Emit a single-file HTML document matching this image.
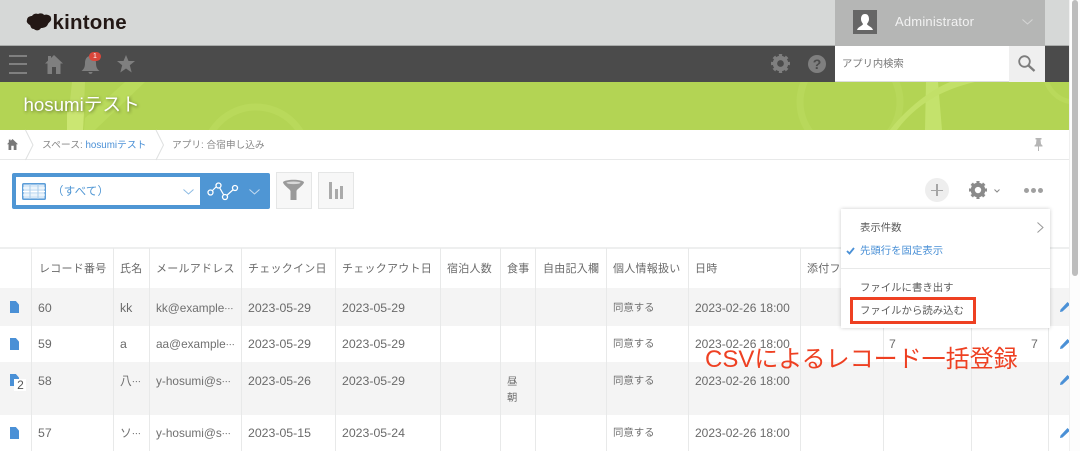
<!DOCTYPE html>
<html lang="ja"><head><meta charset="utf-8">
<style>
*{box-sizing:border-box}
html,body{margin:0;padding:0;width:1080px;height:451px;overflow:hidden;background:#fff}
body{position:relative;font-family:"Liberation Sans","Noto Sans CJK JP",sans-serif;color:#666}
.a{position:absolute;white-space:nowrap}
svg{position:absolute;display:block;overflow:visible}
.c{position:absolute;font-size:12.3px;line-height:16px;color:#6a6a6a;white-space:nowrap}
.c i{font-style:normal;font-size:9px}
.d{font-size:12px}
.m{font-size:11.8px;color:#707070}
.j{font-size:10.4px;color:#707070;margin-top:1px}
.h{position:absolute;top:261px;font-size:11px;line-height:16px;letter-spacing:.25px;color:#6a6a6a;white-space:nowrap}
.v{position:absolute;top:248px;bottom:0;width:1px;background:#e8e9e9}
.doc{position:absolute;left:10px;width:9px;height:12px;background:#4a90d6;clip-path:polygon(0 0,65% 0,100% 30%,100% 100%,0 100%)}
.mi{position:absolute;left:860px;font-size:10.4px;line-height:16px;color:#5a5a5a;white-space:nowrap}
</style></head><body>

<!-- header -->
<div class="a" style="left:0;top:0;width:1069px;height:46px;background:#d6d8d7;border-bottom:1px solid #a9abaa"></div>
<svg style="left:26px;top:13px" width="27" height="18" viewBox="0 0 27 18"><path d="M1 7C1 4 4 3 6 3C7 1 10 0 12 1C14 0 17 0 18 2C20 1 25 2 25 5C26 8 23 9 22 11C21 14 18 15 15 15C13 18 10 18 8 16C5 16 5 14 4 12C2 11 0 9 1 7Z" fill="#231815"/></svg>
<div class="a" style="left:52.500px;top:10px;font-size:20.500px;line-height:25px;font-weight:700;color:#231815;letter-spacing:.2px">kintone</div>

<div class="a" style="left:835px;top:0;width:210px;height:46px;background:#b5b6b5"></div>
<div class="a" style="left:853px;top:10px;width:24px;height:24px;background:#666"></div>
<svg style="left:853px;top:10px" width="24" height="24" viewBox="0 0 24 24"><path d="M12 4C15 4 16 6.500 16 9C16 11.500 14.500 13 14 14C14.500 16 19 16.500 20 20H4C5 16.500 9.500 16 10 14C9.500 13 8 11.500 8 9C8 6.500 9 4 12 4Z" fill="#fff"/></svg>
<div class="a" style="left:895px;top:14px;font-size:13px;line-height:16px;color:#f2f2f2;letter-spacing:.2px">Administrator</div>
<svg style="left:1022px;top:19px" width="11" height="6" viewBox="0 0 11 6"><path d="M.5.5L5.500 5L10.500.5" fill="none" stroke="#d5d6d5" stroke-width="1"/></svg>

<!-- dark bar -->
<div class="a" style="left:0;top:46px;width:1069px;height:36px;background:#4b4b4b"></div>
<div class="a" style="left:9px;top:55px;width:18px;height:2px;background:#808080"></div>
<div class="a" style="left:9px;top:63px;width:18px;height:2px;background:#808080"></div>
<div class="a" style="left:9px;top:72px;width:18px;height:2px;background:#808080"></div>
<svg style="left:45px;top:55px" width="18" height="19" viewBox="0 0 18 19"><path d="M9 0L18 8.500H15.500V19H11V12H7V19H2.500V8.500H0L3 5.600V1H6V3Z" fill="#7f7f7f"/></svg>
<svg style="left:81px;top:56px" width="19" height="19" viewBox="0 0 19 19"><path d="M9.500 0C13 0 15 3 15 7C15 11 16 13 18.500 15H.5C3 13 4 11 4 7C4 3 6 0 9.500 0ZM7.500 16H11.500C11.500 18.500 7.500 18.500 7.500 16Z" fill="#7f7f7f"/></svg>
<div class="a" style="left:89px;top:52px;width:12px;height:9px;border-radius:5px;background:#d9473b;color:#fff;font-size:7px;line-height:9px;text-align:center">1</div>
<svg style="left:117px;top:55px" width="18" height="18" viewBox="0 0 18 18"><path d="M9 0L11.500 6H18L12.800 10.200L14.700 17.500L9 13.500L3.300 17.500L5.200 10.200L0 6H6.500Z" fill="#7f7f7f"/></svg>
<svg style="left:771px;top:54px" width="19" height="19" viewBox="0 0 24 24"><circle cx="12" cy="12" r="7" fill="none" stroke="#7f7f7f" stroke-width="5.500"/><circle cx="12" cy="12" r="10.500" fill="none" stroke="#7f7f7f" stroke-width="3" pathLength="80" stroke-dasharray="5 5" stroke-dashoffset="2.500"/></svg>
<div class="a" style="left:808px;top:55px;width:18px;height:18px;border-radius:50%;background:#7f7f7f;color:#4b4b4b;font-size:14px;font-weight:700;line-height:18px;text-align:center">?</div>
<div class="a" style="left:835px;top:46px;width:174px;height:36px;background:#fff;border-bottom:1px solid #ddd"></div>
<div class="a" style="left:842px;top:57px;font-size:10.300px;line-height:16px;color:#777">アプリ内検索</div>
<div class="a" style="left:1009px;top:46px;width:36px;height:36px;background:#efefef"></div>
<svg style="left:1018px;top:55px" width="17" height="17" viewBox="0 0 17 17"><circle cx="6.500" cy="6.500" r="5.300" fill="none" stroke="#7d7d7d" stroke-width="1.800"/><path d="M10.500 10.500L16.500 16" stroke="#7d7d7d" stroke-width="2.300"/></svg>

<!-- green -->
<div class="a" style="left:0;top:82px;width:1069px;height:48px;background:#b3d454;overflow:hidden">
<svg style="left:0;top:0" width="1069" height="48" viewBox="0 0 1069 48">
<path d="M72 0H85L83 48H67Z" fill="#bfdc64"/><path d="M67 30H84L83 48H67Z" fill="#cbe672"/><path d="M85 36L125 0H145L95 48H84Z" fill="#badb5c"/>
<circle cx="256" cy="77" r="52" fill="none" stroke="#b9d95b" stroke-width="7"/>
<circle cx="850" cy="20" r="50" fill="none" stroke="#b8d85b" stroke-width="7"/>
<path d="M926 0H938L942 48H925Z" fill="#c4e26c"/><path d="M897 48C915 24 940 8 975 0H950C930 8 905 28 890 48Z" fill="#c2e068"/>
<circle cx="1075" cy="-10" r="30" fill="none" stroke="#b9d95b" stroke-width="5"/>
</svg></div>
<div class="a" style="left:23.500px;top:92px;font-size:18.700px;line-height:25px;color:#fff;text-shadow:1px 1px 3px rgba(0,0,0,.45)">hosumiテスト</div>

<!-- breadcrumb -->
<div class="a" style="left:0;top:159px;width:1069px;height:1px;background:#e8e9e9"></div>
<svg style="left:7px;top:139px" width="11" height="11" viewBox="0 0 18 18"><path d="M9 0L18 8.500H15.500V18H11V11H7V18H2.500V8.500H0L3 5.600V1H6V3Z" fill="#777"/></svg>
<svg style="left:25px;top:130px" width="150" height="30" viewBox="0 0 150 30"><path d="M.5 0L8 15L.5 30M131 0L138.500 15L131 30" fill="none" stroke="#dfe0e0"/></svg>
<div class="a" style="left:42px;top:138px;font-size:9.800px;line-height:15px;color:#888">スペース: <span style="color:#4a90d6">hosumiテスト</span></div>
<div class="a" style="left:172px;top:138px;font-size:9.700px;line-height:15px;color:#888">アプリ: 合宿申し込み</div>
<svg style="left:1034px;top:138px" width="9" height="13" viewBox="0 0 9 13"><path d="M1.500 0H7.500V1.500H6.500L7 6L8.500 7.500V8.500H5V13H4V8.500H.5V7.500L2 6L2.500 1.500H1.500Z" fill="#b5b5b5"/></svg>

<!-- view selector -->
<div class="a" style="left:12px;top:173px;width:258px;height:36px;background:#4f96d4;border-radius:2px"></div>
<div class="a" style="left:16px;top:177px;width:184px;height:28px;background:#fff"></div>
<svg style="left:22px;top:183px" width="24" height="17" viewBox="0 0 24 17"><rect x=".75" y=".75" width="22.500" height="15.500" rx="1" fill="#d7e8f7" stroke="#5b9dd8" stroke-width="1.500"/><path d="M1 5H23M1 8.500H23M1 12H23" stroke="#fff"/><path d="M8 1V16M16 1V16" stroke="#a9cbea"/></svg>
<div class="a" style="left:52px;top:184px;font-size:11.500px;line-height:16px;color:#4f96d4;letter-spacing:.2px">（すべて）</div>
<svg style="left:183px;top:189px" width="11" height="6" viewBox="0 0 11 6"><path d="M.5.5L5.500 5L10.500.5" fill="none" stroke="#8dbbe3" stroke-width="1"/></svg>
<svg style="left:207px;top:182px" width="32" height="19" viewBox="0 0 32 19"><path d="M3 11L11 3L18 15L28 6" fill="none" stroke="#fff" stroke-width="1.200"/><g fill="#4f96d4" stroke="#fff" stroke-width="1.300"><circle cx="3.500" cy="10.500" r="2.500"/><circle cx="11.500" cy="3.500" r="2.500"/><circle cx="18" cy="15" r="2.500"/><circle cx="28" cy="6" r="2.500"/></g></svg>
<svg style="left:249px;top:189px" width="11" height="6" viewBox="0 0 11 6"><path d="M.5.5L5.500 5L10.500.5" fill="none" stroke="#c6dcf1" stroke-width="1"/></svg>

<div class="a" style="left:276px;top:172px;width:36px;height:37px;background:#f7f7f7;border:1px solid #e5e6e6"></div>
<svg style="left:283px;top:180px" width="21" height="20" viewBox="0 0 21 20"><path d="M0 2C3 -1 18 -1 21 2C21 5 14 9 13.500 11V20H7.500V11C7 9 0 5 0 2Z" fill="#9a9a9a"/><ellipse cx="10.500" cy="2.800" rx="7" ry="1.300" fill="#d8d8d8"/></svg>
<div class="a" style="left:318px;top:172px;width:36px;height:37px;background:#f7f7f7;border:1px solid #e5e6e6"></div>
<div class="a" style="left:329px;top:182px;width:3px;height:17px;background:#aaa"></div>
<div class="a" style="left:335px;top:189px;width:3px;height:10px;background:#aaa"></div>
<div class="a" style="left:340px;top:186px;width:3px;height:13px;background:#aaa"></div>

<!-- right tools -->
<div class="a" style="left:925px;top:178px;width:24px;height:24px;border-radius:50%;background:#eeeeee"></div>
<div class="a" style="left:931px;top:189.500px;width:12px;height:1.500px;background:#a5a5a5"></div>
<div class="a" style="left:936.300px;top:184px;width:1.500px;height:12px;background:#a5a5a5"></div>
<svg style="left:969px;top:181px" width="18" height="18" viewBox="0 0 24 24"><circle cx="12" cy="12" r="7" fill="none" stroke="#8a8a8a" stroke-width="5.500"/><circle cx="12" cy="12" r="10.500" fill="none" stroke="#8a8a8a" stroke-width="3" pathLength="80" stroke-dasharray="5 5" stroke-dashoffset="2.500"/></svg>
<svg style="left:994px;top:189px" width="6" height="4" viewBox="0 0 6 4"><path d="M.5.5L3 3L5.500.5" fill="none" stroke="#888"/></svg>
<div class="a" style="left:1024px;top:188px;width:5px;height:5px;border-radius:50%;background:#a0a0a0"></div>
<div class="a" style="left:1031px;top:188px;width:5px;height:5px;border-radius:50%;background:#a0a0a0"></div>
<div class="a" style="left:1038px;top:188px;width:5px;height:5px;border-radius:50%;background:#a0a0a0"></div>

<!-- table backgrounds -->
<div class="a" style="left:0;top:247px;width:1069px;height:2px;background:#eeefef"></div>
<div class="a" style="left:0;top:288px;width:1069px;height:38px;background:#f4f4f4"></div>
<div class="a" style="left:0;top:362px;width:1069px;height:53px;background:#f4f4f4"></div>
<div class="v" style="left:31px"></div><div class="v" style="left:113px"></div><div class="v" style="left:149px"></div><div class="v" style="left:241px"></div><div class="v" style="left:335px"></div><div class="v" style="left:440px"></div><div class="v" style="left:500px"></div><div class="v" style="left:535px"></div><div class="v" style="left:606px"></div><div class="v" style="left:688px"></div><div class="v" style="left:800px"></div><div class="v" style="left:883px"></div><div class="v" style="left:971px"></div><div class="v" style="left:1048px"></div>

<div class="h" style="left:39px">レコード番号</div>
<div class="h" style="left:120px">氏名</div>
<div class="h" style="left:156px">メールアドレス</div>
<div class="h" style="left:248px">チェックイン日</div>
<div class="h" style="left:342px">チェックアウト日</div>
<div class="h" style="left:447px">宿泊人数</div>
<div class="h" style="left:507px">食事</div>
<div class="h" style="left:543px">自由記入欄</div>
<div class="h" style="left:613px">個人情報扱い</div>
<div class="h" style="left:695px">日時</div>
<div class="h" style="left:807px">添付ファイル</div>

<!-- rows -->
<div class="doc" style="top:301px"></div>
<div class="c" style="left:38px;top:300px">60</div><div class="c" style="left:120px;top:300px">kk</div><div class="c m" style="left:156px;top:300px">kk@example<i>⋯</i></div><div class="c" style="left:248px;top:300px">2023-05-29</div><div class="c" style="left:342px;top:300px">2023-05-29</div><div class="c j" style="left:613px;top:300px">同意する</div><div class="c d" style="left:695px;top:300px">2023-02-26 18:00</div>

<div class="doc" style="top:338px"></div>
<div class="c" style="left:38px;top:336px">59</div><div class="c" style="left:120px;top:336px">a</div><div class="c m" style="left:156px;top:336px">aa@example<i>⋯</i></div><div class="c" style="left:248px;top:336px">2023-05-29</div><div class="c" style="left:342px;top:336px">2023-05-29</div><div class="c j" style="left:613px;top:336px">同意する</div><div class="c d" style="left:695px;top:336px">2023-02-26 18:00</div><div class="c" style="left:889px;top:336px">7</div><div class="c" style="left:1031px;top:336px">7</div>

<div class="doc" style="top:374px"></div>
<div class="a" style="left:14px;top:379px;width:12px;height:12px;background:#fff;font-size:12px;line-height:13px;text-align:center;color:#555;padding-left:1px">2</div>
<div class="c" style="left:38px;top:373px">58</div><div class="c m" style="left:120px;top:373px">八<i>⋯</i></div><div class="c m" style="left:156px;top:373px">y-hosumi@s<i>⋯</i></div><div class="c" style="left:248px;top:373px">2023-05-26</div><div class="c" style="left:342px;top:373px">2023-05-29</div><div class="c j" style="left:507px;top:374px">昼</div><div class="c j" style="left:507px;top:390px">朝</div><div class="c j" style="left:613px;top:373px">同意する</div><div class="c d" style="left:695px;top:373px">2023-02-26 18:00</div>

<div class="doc" style="top:427px"></div>
<div class="c" style="left:38px;top:425px">57</div><div class="c m" style="left:120px;top:425px">ソ<i>⋯</i></div><div class="c m" style="left:156px;top:425px">y-hosumi@s<i>⋯</i></div><div class="c" style="left:248px;top:425px">2023-05-15</div><div class="c" style="left:342px;top:425px">2023-05-24</div><div class="c j" style="left:613px;top:425px">同意する</div><div class="c d" style="left:695px;top:425px">2023-02-26 18:00</div>

<svg style="left:1060px;top:302px" width="10" height="10" viewBox="0 0 10 10"><path d="M7.500 0L10 2.500L2.500 9.500L0 10L.5 7.500Z" fill="#4a90d6"/></svg>
<svg style="left:1060px;top:339px" width="10" height="10" viewBox="0 0 10 10"><path d="M7.500 0L10 2.500L2.500 9.500L0 10L.5 7.500Z" fill="#4a90d6"/></svg>
<svg style="left:1060px;top:375px" width="10" height="10" viewBox="0 0 10 10"><path d="M7.500 0L10 2.500L2.500 9.500L0 10L.5 7.500Z" fill="#4a90d6"/></svg>
<svg style="left:1060px;top:428px" width="10" height="10" viewBox="0 0 10 10"><path d="M7.500 0L10 2.500L2.500 9.500L0 10L.5 7.500Z" fill="#4a90d6"/></svg>

<!-- dropdown -->
<div class="a" style="left:841px;top:209px;width:209px;height:119px;background:#fff;box-shadow:0 0 4px rgba(0,0,0,.2)"></div>
<div class="mi" style="top:221px">表示件数</div>
<svg style="left:1037px;top:222px" width="7" height="11" viewBox="0 0 7 11"><path d="M.5.5L6 5.500L.5 10.500" fill="none" stroke="#999"/></svg>
<svg style="left:846px;top:247px" width="9" height="8" viewBox="0 0 9 8"><path d="M1 4L3.500 6.500L8 1" fill="none" stroke="#4a90d6" stroke-width="1.800"/></svg>
<div class="mi" style="top:244px;color:#4a90d6">先頭行を固定表示</div>
<div class="a" style="left:841px;top:268px;width:209px;height:1px;background:#e8e9e9"></div>
<div class="mi" style="top:281px">ファイルに書き出す</div>
<div class="mi" style="top:304px">ファイルから読み込む</div>
<div class="a" style="left:850px;top:297px;width:126px;height:27px;border:3px solid #ee4022"></div>

<!-- annotation -->
<div class="a" style="left:705px;top:343px;font-size:24px;line-height:34px;color:#ee4022">CSVによるレコード一括登録</div>

<!-- scrollbar -->
<div class="a" style="left:1069px;top:0;width:11px;height:451px;background:#fdfdfd;border-left:1px solid #f0f0f0"></div>
<div class="a" style="left:1072px;top:0;width:6px;height:276px;background:#bdbdbd;border-radius:3px"></div>
</body></html>
